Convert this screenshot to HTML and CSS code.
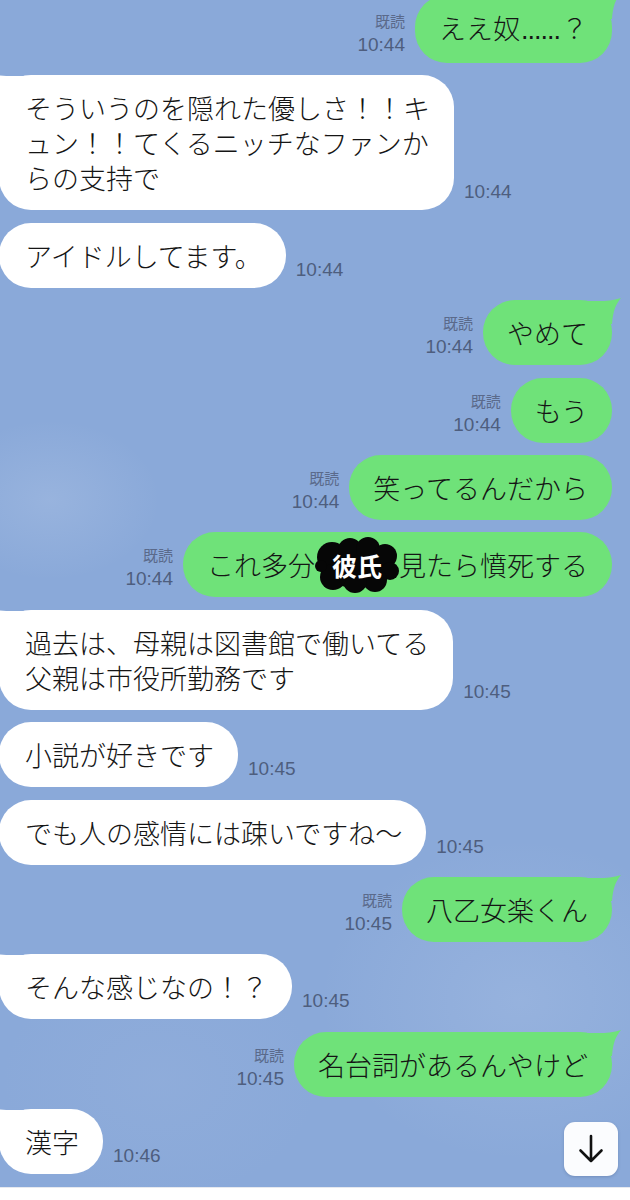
FILE: index.html
```html
<!DOCTYPE html>
<html lang="ja">
<head>
<meta charset="utf-8">
<title>LINE</title>
<link rel="stylesheet" href="styles.css">
</head>
<body>
<div class="screen">
  <div class="chat">
    <div class="msgs">
      <div class="row out tailed">
        <div class="meta"><span class="read">既読</span><span class="time">10:44</span></div>
        <div class="bubble">ええ奴<span class="dots">......</span>？<svg class="tail" viewBox="0 0 34 26"><path d="M0,3 C10,3 22,4 33,0 C28,6 25,12 24,26 L0,26 Z"/></svg></div>
      </div>
      <div class="row in tailed">
        <div class="bubble wide">そういうのを隠れた優しさ！！キュン！！てくるニッチなファンからの支持で<svg class="tail" viewBox="0 0 34 26"><path d="M0,3 C10,3 22,4 33,0 C28,6 25,12 24,26 L0,26 Z"/></svg></div>
        <div class="meta"><span class="time">10:44</span></div>
      </div>
      <div class="row in">
        <div class="bubble">アイドルしてます。</div>
        <div class="meta"><span class="time">10:44</span></div>
      </div>
      <div class="row out tailed">
        <div class="meta"><span class="read">既読</span><span class="time">10:44</span></div>
        <div class="bubble">やめて<svg class="tail" viewBox="0 0 34 26"><path d="M0,3 C10,3 22,4 33,0 C28,6 25,12 24,26 L0,26 Z"/></svg></div>
      </div>
      <div class="row out">
        <div class="meta"><span class="read">既読</span><span class="time">10:44</span></div>
        <div class="bubble">もう</div>
      </div>
      <div class="row out">
        <div class="meta"><span class="read">既読</span><span class="time">10:44</span></div>
        <div class="bubble">笑ってるんだから</div>
      </div>
      <div class="row out">
        <div class="meta"><span class="read">既読</span><span class="time">10:44</span></div>
        <div class="bubble">これ多分<span class="blot"><svg class="blot-ink" viewBox="0 0 84 56"><g fill="#060606"><ellipse cx="42" cy="29" rx="37" ry="22"/><circle cx="17" cy="20" r="15"/><circle cx="35" cy="13" r="12"/><circle cx="53" cy="12" r="12"/><circle cx="70" cy="19" r="12"/><circle cx="75" cy="34" r="9"/><circle cx="60" cy="43" r="12"/><circle cx="40" cy="44" r="12"/><circle cx="18" cy="40" r="13"/><circle cx="6" cy="29" r="6"/></g></svg><span class="blot-text">彼氏</span></span>見たら憤死する</div>
      </div>
      <div class="row in tailed">
        <div class="bubble"><span class="line">過去は、母親は図書館で働いてる</span><span class="line">父親は市役所勤務です</span><svg class="tail" viewBox="0 0 34 26"><path d="M0,3 C10,3 22,4 33,0 C28,6 25,12 24,26 L0,26 Z"/></svg></div>
        <div class="meta"><span class="time">10:45</span></div>
      </div>
      <div class="row in">
        <div class="bubble">小説が好きです</div>
        <div class="meta"><span class="time">10:45</span></div>
      </div>
      <div class="row in">
        <div class="bubble">でも人の感情には疎いですね〜</div>
        <div class="meta"><span class="time">10:45</span></div>
      </div>
      <div class="row out tailed">
        <div class="meta"><span class="read">既読</span><span class="time">10:45</span></div>
        <div class="bubble">八乙女楽くん<svg class="tail" viewBox="0 0 34 26"><path d="M0,3 C10,3 22,4 33,0 C28,6 25,12 24,26 L0,26 Z"/></svg></div>
      </div>
      <div class="row in tailed">
        <div class="bubble">そんな感じなの！？<svg class="tail" viewBox="0 0 34 26"><path d="M0,3 C10,3 22,4 33,0 C28,6 25,12 24,26 L0,26 Z"/></svg></div>
        <div class="meta"><span class="time">10:45</span></div>
      </div>
      <div class="row out tailed">
        <div class="meta"><span class="read">既読</span><span class="time">10:45</span></div>
        <div class="bubble">名台詞があるんやけど<svg class="tail" viewBox="0 0 34 26"><path d="M0,3 C10,3 22,4 33,0 C28,6 25,12 24,26 L0,26 Z"/></svg></div>
      </div>
      <div class="row in tailed">
        <div class="bubble">漢字<svg class="tail" viewBox="0 0 34 26"><path d="M0,3 C10,3 22,4 33,0 C28,6 25,12 24,26 L0,26 Z"/></svg></div>
        <div class="meta"><span class="time">10:46</span></div>
      </div>
    </div>
    <div class="down" aria-label="下へ">
      <svg viewBox="0 0 54 54" width="54" height="54"><path d="M27 14 V39 M16.5 28.5 L27 39 L37.5 28.5" fill="none" stroke="#111" stroke-width="2.6" stroke-linecap="round" stroke-linejoin="round"/></svg>
    </div>
  </div>
  <div class="footer"></div>
</div>
</body>
</html>
```

FILE: styles.css
```css
html, body {
  margin: 0;
  padding: 0;
  background: #ffffff;
}

.screen {
  width: 630px;
  height: 1200px;
  overflow: hidden;
  display: flex;
  flex-direction: column;
  font-family: "Noto Sans CJK JP", "Noto Sans", sans-serif;
}

.chat {
  position: relative;
  height: 1187px;
  flex: none;
  overflow: hidden;
  background-color: #8aa9d9;
  background-image:
    radial-gradient(ellipse 110px 80px at 50px 500px, rgba(215, 226, 243, 0.18), rgba(215, 226, 243, 0) 100%),
    radial-gradient(ellipse 200px 160px at 520px 1000px, rgba(200, 215, 240, 0.2), rgba(200, 215, 240, 0) 100%),
    radial-gradient(ellipse 160px 120px at 160px 1080px, rgba(170, 190, 225, 0.15), rgba(170, 190, 225, 0) 100%);
}

.msgs {
  display: flex;
  flex-direction: column;
  gap: 12.4px;
  margin-top: -5px;
}

.row {
  display: flex;
  align-items: flex-end;
}

.row.out {
  justify-content: flex-end;
  padding-right: 18px;
}

.bubble {
  position: relative;
  font-size: 27px;
  font-weight: 300;
  line-height: 35px;
  color: #151515;
  padding: 15px 24px;
  border-radius: 32px;
  white-space: nowrap;
}

.bubble.wide {
  white-space: normal;
  width: 405px;
  line-break: anywhere;
}

.line {
  display: block;
}

.dots {
  font-family: "Liberation Sans", Arial, sans-serif;
  letter-spacing: -1px;
  margin: 0 1px;
}

.row.out .bubble {
  background: #6fe279;
}

.row.in .bubble {
  background: #ffffff;
  margin-left: -1px;
  padding-left: 26px;
}

.tail {
  position: absolute;
  top: -2px;
  width: 34px;
  height: 26px;
}

.row.out .tail {
  right: -10px;
  fill: #6fe279;
}

.row.in .tail {
  left: -10px;
  fill: #ffffff;
  transform: scaleX(-1);
}

.meta {
  display: flex;
  flex-direction: column;
  align-items: flex-end;
  margin-bottom: 7px;
}

.row.out .meta {
  margin-right: 10px;
}

.row.in .meta {
  margin-left: 10px;
  align-items: flex-start;
}

.read {
  font-size: 15px;
  line-height: 20px;
  color: #5a6a8b;
  margin-bottom: 3px;
}

.time {
  font-family: "Liberation Sans", Arial, sans-serif;
  font-size: 19px;
  line-height: 22px;
  color: #4e5e7e;
}

.blot {
  position: relative;
  display: inline-block;
  width: 84px;
  height: 35px;
  vertical-align: top;
  text-align: center;
}

.blot-ink {
  position: absolute;
  left: 0;
  top: -10px;
  width: 84px;
  height: 56px;
}

.blot-text {
  position: relative;
  color: #ffffff;
  font-weight: 700;
  font-size: 25px;
  line-height: 35px;
}

.down {
  position: absolute;
  right: 12px;
  bottom: 11px;
  width: 54px;
  height: 54px;
  border-radius: 11px;
  background: #fbfcfe;
  box-shadow: 0 1px 3px rgba(40, 60, 100, 0.25);
}

.down svg {
  display: block;
}

.footer {
  height: 13px;
  flex: none;
  background: #ffffff;
  border-top: 1px solid #e6e9ef;
  box-sizing: border-box;
}
```
